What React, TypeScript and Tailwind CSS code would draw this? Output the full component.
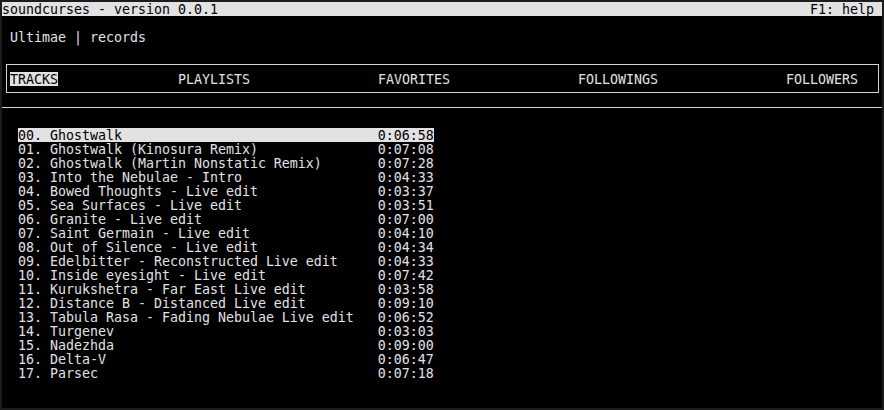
const tracks: [string, string][] = [
  ['Ghostwalk', '0:06:58'],
  ['Ghostwalk (Kinosura Remix)', '0:07:08'],
  ['Ghostwalk (Martin Nonstatic Remix)', '0:07:28'],
  ['Into the Nebulae - Intro', '0:04:33'],
  ['Bowed Thoughts - Live edit', '0:03:37'],
  ['Sea Surfaces - Live edit', '0:03:51'],
  ['Granite - Live edit', '0:07:00'],
  ['Saint Germain - Live edit', '0:04:10'],
  ['Out of Silence - Live edit', '0:04:34'],
  ['Edelbitter - Reconstructed Live edit', '0:04:33'],
  ['Inside eyesight - Live edit', '0:07:42'],
  ['Kurukshetra - Far East Live edit', '0:03:58'],
  ['Distance B - Distanced Live edit', '0:09:10'],
  ['Tabula Rasa - Fading Nebulae Live edit', '0:06:52'],
  ['Turgenev', '0:03:03'],
  ['Nadezhda', '0:09:00'],
  ['Delta-V', '0:06:47'],
  ['Parsec', '0:07:18'],
];

// tab name + column (relative to the first tab)
const tabs: [string, number][] = [
  ['TRACKS', 0],
  ['PLAYLISTS', 21],
  ['FAVORITES', 46],
  ['FOLLOWINGS', 71],
  ['FOLLOWERS', 97],
];

const pad = (s: string, n: number) => (s.length >= n ? s : s + ' '.repeat(n - s.length));

function Cell({ children, active }: { children?: React.ReactNode; active?: boolean }) {
  return (
    <span className={`inline-block h-[14px] align-top ${active ? 'bg-[#e2e2e2] text-black' : ''}`}>
      <span className="relative top-px">{children}</span>
    </span>
  );
}

function Row({ children, className = '' }: { children?: React.ReactNode; className?: string }) {
  return <div className={`h-[14px] leading-[14px] whitespace-pre ${className}`}>{children}</div>;
}

export default function App() {
  return (
    <div className="w-[884px] h-[410px] bg-[#1c1c1c] p-[2px]">
      <div className="w-[880px] h-[406px] bg-black text-[#e2e2e2] text-[13.29px] font-['DejaVu_Sans_Mono','Liberation_Mono',monospace] overflow-hidden">
        {/* title bar */}
        <Row className="flex justify-between bg-[#e2e2e2] text-black">
          <Cell>soundcurses - version 0.0.1</Cell>
          <Cell>F1: help </Cell>
        </Row>
        <Row />
        <Row>
          <Cell> Ultimae | records</Cell>
        </Row>
        <Row />

        {/* tab box */}
        <div className="ml-[4px] mr-[3px] mt-[6px] mb-[7px] h-[29px] border border-[#d4d4d4] pt-[7px] pl-[3px]">
          <div className="relative h-[14px] leading-[14px]">
            {tabs.map(([name, col], i) => (
              <span key={name} className="absolute top-0 whitespace-pre" style={{ left: col * 8 }}>
                <Cell active={i === 0}>{name}</Cell>
              </span>
            ))}
          </div>
        </div>

        {/* separator */}
        <div className="h-[14px] pt-[7px]">
          <div className="h-px bg-[#d4d4d4]" />
        </div>
        <Row />

        {tracks.map(([title, time], i) => (
          <Row key={i} className="pl-[16px]">
            <Cell active={i === 0}>
              {pad(`${String(i).padStart(2, '0')}. ${title}`, 45)}
              {time}
            </Cell>
          </Row>
        ))}
      </div>
    </div>
  );
}
